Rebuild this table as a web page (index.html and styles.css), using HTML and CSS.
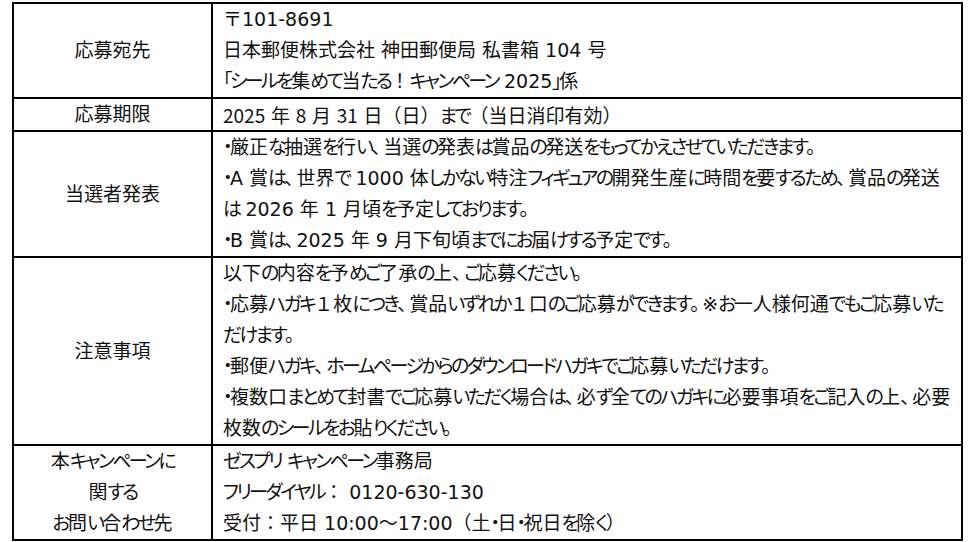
FILE: index.html
```html
<!DOCTYPE html>
<html lang="ja">
<head>
<meta charset="utf-8">
<link rel="stylesheet" href="styles.css">
<script src="script.js" defer></script>
</head>
<body>
<div class="page">
<table class="info">
  <colgroup>
    <col class="col-label">
    <col class="col-body">
  </colgroup>
  <tr>
    <th class="label">応募宛先</th>
    <td class="body">〒101-8691<br>日本郵便株式会社 神田郵便局 私書箱 104 号<br>「シールを集めて当たる！キャンペーン 2025」係</td>
  </tr>
  <tr>
    <th class="label">応募期限</th>
    <td class="body narrow-latin">2025 年 8 月 31 日（日）まで（当日消印有効）</td>
  </tr>
  <tr>
    <th class="label">当選者発表</th>
    <td class="body">・厳正な抽選を行い、当選の発表は賞品の発送をもってかえさせていただきます。<br>・A 賞は、世界で 1000 体しかない特注フィギュアの開発生産に時間を要するため、賞品の発送<br>は 2026 年 1 月頃を予定しております。<br>・B 賞は、2025 年 9 月下旬頃までにお届けする予定です。</td>
  </tr>
  <tr>
    <th class="label">注意事項</th>
    <td class="body">以下の内容を予めご了承の上、ご応募ください。<br>・応募ハガキ１枚につき、賞品いずれか１口のご応募ができます。※お一人様何通でもご応募いた<br>だけます。<br>・郵便ハガキ、ホームページからのダウンロードハガキでご応募いただけます。<br>・複数口まとめて封書でご応募いただく場合は、必ず全てのハガキに必要事項をご記入の上、必要<br>枚数のシールをお貼りください。</td>
  </tr>
  <tr>
    <th class="label">本キャンペーンに<br>関する<br>お問い合わせ先</th>
    <td class="body">ゼスプリ キャンペーン事務局<br>フリーダイヤル： 0120-630-130<br>受付：平日 10:00～17:00（土・日・祝日を除く）</td>
  </tr>
</table>
</div>
</body>
</html>
```

FILE: styles.css
```css
html, body {
  margin: 0;
  padding: 0;
  background: #ffffff;
}
.page {
  padding: 2px 0 0 12px;
}
.info {
  border-collapse: collapse;
  table-layout: fixed;
  width: 949px;
  font-family: "DejaVu Sans", "Noto Sans CJK JP", sans-serif;
  font-size: 19px;
  line-height: 31px;
  color: #111111;
}
.col-label {
  width: 199px;
}
.col-body {
  width: 750px;
}
.info th, .info td {
  border: 2px solid #000000;
  padding: 0;
  font-weight: normal;
}
.label {
  text-align: center;
  vertical-align: middle;
}
.info td.body {
  text-align: left;
  vertical-align: top;
  padding-left: 10px;
  white-space: nowrap;
}
.info td.narrow-latin {
  font-family: "Noto Sans CJK JP", sans-serif;
  word-spacing: 1.5px;
}
.kana {
  font-feature-settings: "palt";
  letter-spacing: -2.6px;
}
.punct {
  letter-spacing: -7px;
}
```

FILE: script.js
```js
(function () {
  var re = /([\u3040-\u30ff\u300c\u300d]+)|([\u3001\u3002])/g;
  document.querySelectorAll('.info th, .info td').forEach(function (cell) {
    var walker = document.createTreeWalker(cell, NodeFilter.SHOW_TEXT);
    var nodes = [];
    while (walker.nextNode()) nodes.push(walker.currentNode);
    nodes.forEach(function (node) {
      var text = node.nodeValue;
      var frag = document.createDocumentFragment();
      var last = 0;
      var m;
      var found = false;
      re.lastIndex = 0;
      while ((m = re.exec(text)) !== null) {
        found = true;
        if (m.index > last) frag.appendChild(document.createTextNode(text.slice(last, m.index)));
        var span = document.createElement('span');
        span.className = m[1] ? 'kana' : 'punct';
        span.textContent = m[0];
        frag.appendChild(span);
        last = m.index + m[0].length;
      }
      if (!found) return;
      if (last < text.length) frag.appendChild(document.createTextNode(text.slice(last)));
      node.parentNode.replaceChild(frag, node);
    });
  });
})();
```
